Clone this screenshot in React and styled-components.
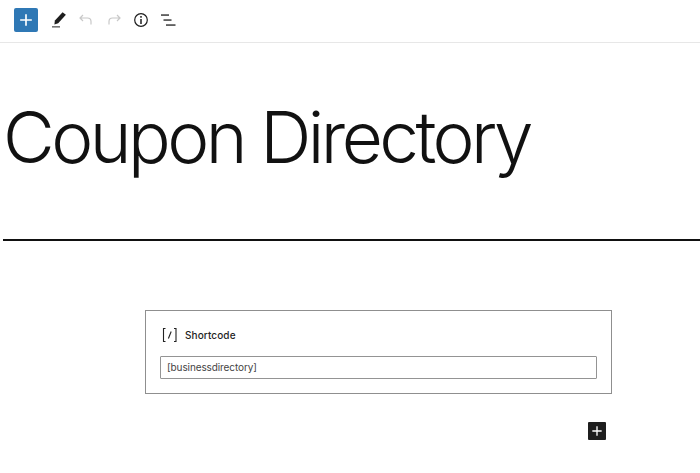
import styled, { createGlobalStyle } from "styled-components"

const GlobalStyle = createGlobalStyle`
  html, body {
    margin: 0;
    padding: 0;
    background: #fff;
    font-family: Inter, "Liberation Sans", sans-serif;
    color: #1e1e1e;
  }
`

const Page = styled.div`
  width: 700px;
  height: 473px;
  overflow: hidden;
`

const Toolbar = styled.div`
  height: 40px;
  box-sizing: content-box;
  display: flex;
  align-items: center;
  padding: 0 0 2px 14px;
  border-bottom: 1px solid #e7e7e7;
`

const InserterButton = styled.button`
  width: 24px;
  height: 24px;
  padding: 0;
  margin-right: 7px;
  border: 0;
  border-radius: 2px;
  background: #2f78b5;
  color: #fff;
  display: flex;
  align-items: center;
  justify-content: center;
`

const ToolButton = styled.button`
  width: 27.5px;
  height: 24px;
  padding: 0;
  border: 0;
  background: none;
  color: ${(p) => (p.$muted ? "#c8c8c8" : "#1e1e1e")};
  display: flex;
  align-items: center;
  justify-content: center;
`

const Title = styled.h1`
  margin: 0;
  padding: 64px 0 0 3px;
  height: 196px;
  box-sizing: border-box;
  font-size: 71px;
  font-weight: 300;
  line-height: 60px;
  letter-spacing: -3.55px;
  color: #111;
  white-space: nowrap;
`

const Divider = styled.hr`
  margin: 0 0 0 3px;
  height: 2px;
  border: 0;
  background: #111;
`

const Content = styled.div`
  margin: 69px 0 0 145px;
  width: 467px;
`

const ShortcodeBlock = styled.div`
  box-sizing: border-box;
  height: 84px;
  border: 1px solid #8f8f8f;
  padding: 14px 14px 0;
`

const BlockLabel = styled.div`
  display: flex;
  align-items: center;
  gap: 8px;
  height: 20px;
  padding-left: 1px;
  font-size: 10px;
  font-weight: 500;
  letter-spacing: 0.1px;
  color: #1e1e1e;
`

const ShortcodeInput = styled.div`
  box-sizing: border-box;
  height: 23px;
  margin-top: 11px;
  padding-left: 6px;
  border: 1px solid #949494;
  border-radius: 1px;
  font-size: 10px;
  letter-spacing: -0.1px;
  line-height: 21px;
  color: #444;
`

const AppenderRow = styled.div`
  display: flex;
  justify-content: flex-end;
  margin-top: 28px;
  padding-right: 6px;
`

const Appender = styled.button`
  width: 18px;
  height: 18px;
  padding: 0;
  border: 0;
  border-radius: 1px;
  background: #1e1e1e;
  color: #fff;
  display: flex;
  align-items: center;
  justify-content: center;
`

const Plus = ({ size }) => (
  <svg width={size} height={size} viewBox="0 0 24 24" fill="currentColor">
    <path d="M11 5h2v6h6v2h-6v6h-2v-6H5v-2h6z" />
  </svg>
)

const Pencil = () => (
  <svg width="18" height="18" viewBox="0 0 18 18" fill="currentColor">
    <path d="M12.6 1.2 15.9 3.7 8.2 12.2 4.4 13.6 4.9 9.6z" />
    <rect x="2" y="15.2" width="8" height="1.3" fill="#555" />
  </svg>
)

const Undo = () => (
  <svg width="16" height="16" viewBox="0 0 16 16" fill="none" stroke="currentColor" strokeWidth="1.2">
    <path d="M5 3 2 6l3 3M2 6h7.5a3.5 3.5 0 0 1 3.5 3.5V12.5" />
  </svg>
)

const Redo = () => (
  <svg width="16" height="16" viewBox="0 0 16 16" fill="none" stroke="currentColor" strokeWidth="1.2">
    <path d="M11 3l3 3-3 3M14 6H6.5A3.5 3.5 0 0 0 3 9.5V12.5" />
  </svg>
)

const Info = () => (
  <svg width="16" height="16" viewBox="0 0 16 16" fill="none" stroke="currentColor">
    <circle cx="8" cy="8" r="6.3" strokeWidth="1.2" />
    <path d="M8 7v5" strokeWidth="1.5" />
    <path d="M8 4v1.7" strokeWidth="1.5" />
  </svg>
)

const ListView = () => (
  <svg width="16" height="16" viewBox="0 0 16 16" fill="currentColor">
    <rect x="0" y="2.4" width="8" height="1.3" />
    <rect x="2.5" y="7.4" width="8" height="1.3" />
    <rect x="5" y="12.4" width="9.5" height="1.3" />
  </svg>
)

const ShortcodeIcon = () => (
  <svg width="16" height="16" viewBox="0 0 16 16" fill="none" stroke="#222" strokeWidth="1.1">
    <path d="M4.5 1.5h-2v13h2M13 1.5h2v13h-2M10.2 4.5 7.4 11.5" />
  </svg>
)

export default function App() {
  return (
    <Page>
      <GlobalStyle />
      <Toolbar>
        <InserterButton aria-label="Add block">
          <Plus size={20} />
        </InserterButton>
        <ToolButton aria-label="Tools"><Pencil /></ToolButton>
        <ToolButton $muted aria-label="Undo"><Undo /></ToolButton>
        <ToolButton $muted aria-label="Redo"><Redo /></ToolButton>
        <ToolButton aria-label="Details"><Info /></ToolButton>
        <ToolButton aria-label="List view"><ListView /></ToolButton>
      </Toolbar>
      <Title>Coupon Directory</Title>
      <Divider />
      <Content>
        <ShortcodeBlock>
          <BlockLabel>
            <ShortcodeIcon />
            Shortcode
          </BlockLabel>
          <ShortcodeInput>[businessdirectory]</ShortcodeInput>
        </ShortcodeBlock>
        <AppenderRow>
          <Appender aria-label="Add block"><Plus size={16} /></Appender>
        </AppenderRow>
      </Content>
    </Page>
  )
}
